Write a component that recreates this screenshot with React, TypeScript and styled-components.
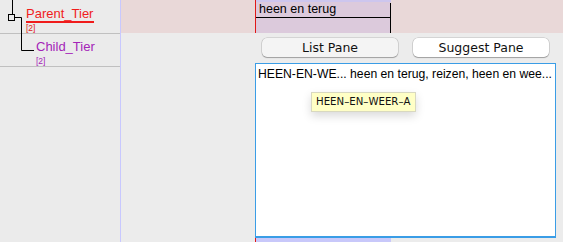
import React from "react";
import styled, { createGlobalStyle } from "styled-components";

const Global = createGlobalStyle`
  html, body { margin: 0; padding: 0; }
  body { width: 563px; height: 242px; overflow: hidden; background: #ebebeb; }
`;

const Frame = styled.div`
  display: flex;
  width: 563px;
  height: 242px;
  overflow: hidden;
  font-family: "Liberation Sans", Arial, sans-serif;
`;

const TierPanel = styled.div`
  position: relative;
  width: 120px;
  flex: none;
  background: #ebebeb;
  border-right: 1px solid #c8c8ff;
`;

const TierRow = styled.div<{ $h: number; $indent: number }>`
  height: ${(p) => p.$h}px;
  border-bottom: 1px solid #c0c0c0;
  padding-left: ${(p) => p.$indent}px;
  box-sizing: border-box;
  display: flex;
  flex-direction: column;
  justify-content: flex-end;
  padding-bottom: 1px;
`;

const TierName = styled.span<{ $color: string; $underline?: boolean }>`
  font-size: 13px;
  line-height: 14px;
  color: ${(p) => p.$color};
  align-self: flex-start;
  border-bottom: ${(p) => (p.$underline ? `2px solid ${p.$color}` : "2px solid transparent")};
  padding-right: 1px;
`;

const TierCount = styled.span<{ $color: string }>`
  font-size: 8.5px;
  line-height: 8px;
  color: ${(p) => p.$color};
  margin-top: 1px;
`;

const TreeLines = styled.svg`
  position: absolute;
  left: 0;
  top: 0;
  pointer-events: none;
`;

const Main = styled.div`
  flex: 1;
  display: flex;
  flex-direction: column;
`;

const Band = styled.div`
  height: 33px;
  flex: none;
  background: #e9d8d8;
  padding-left: 134px;
  display: flex;
`;

const Marker = styled.div`
  width: 1px;
  background: #e01818;
`;

const Cell = styled.div`
  width: 135px;
  background: #dccadc;
  border-top: 2px solid #cdc6ee;
  display: flex;
  flex-direction: column;
  position: relative;
`;

const CellText = styled.div`
  height: 15px;
  border-bottom: 1px solid #000;
  font-size: 12.5px;
  line-height: 14px;
  padding-left: 3px;
  color: #000;
`;

const CellEdge = styled.div`
  position: absolute;
  right: 0;
  top: 1px;
  bottom: 0;
  width: 1px;
  background: #000;
`;

const Lower = styled.div`
  flex: 1;
  background: #ececec;
  padding-left: 134px;
  display: flex;
  flex-direction: column;
`;

const Buttons = styled.div`
  display: flex;
  gap: 15px;
  padding: 5px 0 0 7px;
  height: 30px;
  box-sizing: border-box;
`;

const PaneButton = styled.button<{ $active?: boolean }>`
  width: 136px;
  height: 19px;
  border: none;
  border-radius: 5px;
  background: ${(p) => (p.$active ? "#ffffff" : "#f4f4f4")};
  box-shadow: 0 0 0 0.5px rgba(0, 0, 0, 0.2), 0 1px 1px rgba(0, 0, 0, 0.25);
  font-family: "DejaVu Sans", sans-serif;
  font-size: 12.5px;
  color: #111;
  padding: 0;
  line-height: 19px;
`;

const Editor = styled.div`
  position: relative;
  width: 301px;
  height: 175px;
  box-sizing: border-box;
  background: #fff;
  border: 1px solid #3a9de6;
  border-bottom-width: 2px;
  flex: none;
`;

const EditorText = styled.div`
  font-size: 12.2px;
  line-height: 15px;
  color: #000;
  padding: 3px 0 0 2px;
  white-space: nowrap;
`;

const Tooltip = styled.div`
  position: absolute;
  left: 55px;
  top: 28px;
  padding: 0 4px;
  height: 18px;
  line-height: 18px;
  background: #ffffc6;
  border: 1px solid #d8d8c0;
  box-shadow: 0 4px 10px rgba(0, 0, 0, 0.15);
  font-family: "DejaVu Sans", sans-serif;
  font-size: 10.2px;
  color: #111;
`;

const NextRow = styled.div`
  display: flex;
  flex: 1;
`;

const NextCell = styled.div`
  width: 135px;
  background: #c8c8fa;
`;

export default function App() {
  return (
    <>
      <Global />
      <Frame>
        <TierPanel>
          <TreeLines width="40" height="60">
            <path d="M12.5 0 V14.5" stroke="#000" strokeWidth="1" fill="none" />
            <rect x="8.5" y="14.5" width="6" height="6" stroke="#000" fill="none" />
            <path d="M14.5 17.5 H21.5 V50.5 H34" stroke="#000" strokeWidth="1" fill="none" />
          </TreeLines>
          <TierRow $h={34} $indent={26}>
            <TierName $color="#f01c1c" $underline>Parent_Tier</TierName>
            <TierCount $color="#e02020">[2]</TierCount>
          </TierRow>
          <TierRow $h={33} $indent={36}>
            <TierName $color="#a424b8">Child_Tier</TierName>
            <TierCount $color="#a424b8">[2]</TierCount>
          </TierRow>
        </TierPanel>
        <Main>
          <Band>
            <Marker />
            <Cell>
              <CellText>heen en terug</CellText>
              <CellEdge />
            </Cell>
          </Band>
          <Lower>
            <Buttons>
              <PaneButton>List Pane</PaneButton>
              <PaneButton $active>Suggest Pane</PaneButton>
            </Buttons>
            <Editor>
              <EditorText>HEEN-EN-WE... heen en terug, reizen, heen en wee...</EditorText>
              <Tooltip>HEEN–EN–WEER–A</Tooltip>
            </Editor>
            <NextRow>
              <Marker />
              <NextCell />
            </NextRow>
          </Lower>
        </Main>
      </Frame>
    </>
  );
}
